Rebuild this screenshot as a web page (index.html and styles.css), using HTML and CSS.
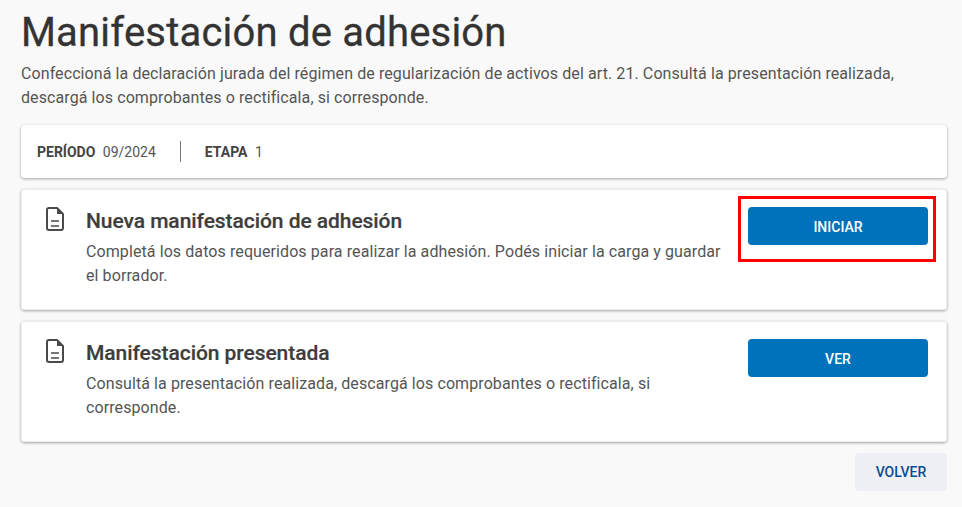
FILE: index.html
```html
<!doctype html>
<html lang="es">
<head>
    <meta charset="utf-8">
    <title>Manifestación de adhesión</title>
    <link rel="stylesheet" href="styles.css">
</head>
<body>
<div class="content">
    <h1>Manifestación de adhesión</h1>
    <p class="intro">Confeccioná la declaración jurada del régimen de regularización de activos del art. 21. Consultá la presentación realizada, descargá los comprobantes o rectificala, si corresponde.</p>

    <div class="card period">
        <span class="period-item"><b>PERÍODO</b> 09/2024</span>
        <span class="period-sep"></span>
        <span class="period-item"><b>ETAPA</b> 1</span>
    </div>

    <div class="card option">
        <svg class="doc-icon" width="18" height="24" viewBox="0 0 18 24"><path d="M11 1H3a2 2 0 0 0-2 2v18a2 2 0 0 0 2 2h12a2 2 0 0 0 2-2V7z" fill="none" stroke="#4a4a4a" stroke-width="2" stroke-linejoin="round"/><path d="M11 1v6h6z" fill="#4a4a4a"/><path d="M5 14h8M5 19h8" stroke="#4a4a4a" stroke-width="1.6"/></svg>
        <div class="option-text">
            <h2>Nueva manifestación de adhesión</h2>
            <p>Completá los datos requeridos para realizar la adhesión. Podés iniciar la carga y guardar el borrador.</p>
        </div>
        <div class="action marked">
            <button class="btn">INICIAR</button>
        </div>
    </div>

    <div class="card option">
        <svg class="doc-icon" width="18" height="24" viewBox="0 0 18 24"><path d="M11 1H3a2 2 0 0 0-2 2v18a2 2 0 0 0 2 2h12a2 2 0 0 0 2-2V7z" fill="none" stroke="#4a4a4a" stroke-width="2" stroke-linejoin="round"/><path d="M11 1v6h6z" fill="#4a4a4a"/><path d="M5 14h8M5 19h8" stroke="#4a4a4a" stroke-width="1.6"/></svg>
        <div class="option-text">
            <h2>Manifestación presentada</h2>
            <p>Consultá la presentación realizada, descargá los comprobantes o rectificala, si corresponde.</p>
        </div>
        <div class="action">
            <button class="btn">VER</button>
        </div>
    </div>

    <div class="footer">
        <button class="btn-back">VOLVER</button>
    </div>
</div>
</body>
</html>
```

FILE: styles.css
```css
html, body {height: 100%;}
body {margin: 0; padding: 0; background: #f9f9f9; color: #333; font-family: Roboto, 'Liberation Sans', sans-serif; overflow: hidden;}
.content {padding: 11px 15px 0 21px; display: flex; flex-direction: column;}
h1 {margin: 0; font-size: 40px; line-height: 44px; font-weight: 400; color: #333; letter-spacing: 0.2px; -webkit-text-stroke: 0.3px #333;}
.intro {margin: 7px 0 0; font-size: 16px; line-height: 24px; color: #555; letter-spacing: 0.09px; width: 920px;}
.card {background: #fff; border-radius: 4px; box-shadow: 0 1px 3px rgba(0, 0, 0, .35);}
.period {margin-top: 15px; height: 53px; display: flex; align-items: center; padding-left: 16px; font-size: 14px; color: #555;}
.period b {color: #444; font-weight: 700; margin-right: 4px;}
.period-sep {width: 1px; height: 21px; background: #777; margin: 0 24px;}
.option {margin-top: 11px; height: 121px; display: flex; box-sizing: border-box; padding: 18px 19px 0 25px; align-items: flex-start; box-shadow: 0 1px 3px rgba(0, 0, 0, .35), inset 0 0 0 1px #ececec;}
.doc-icon {flex: none;}
.option-text {flex: 1; margin-left: 22px; padding-top: 1px;}
h2 {margin: 0; font-size: 21px; line-height: 26px; font-weight: 500; color: #3d3d3d; letter-spacing: -0.06px; -webkit-text-stroke: 0.2px #3d3d3d;}
.option-text p {margin: 6px 0 0; font-size: 16px; line-height: 24px; color: #555; letter-spacing: 0.09px; width: 640px;}
.action {flex: none; width: 180px;}
.btn {width: 180px; height: 38px; border: 0; padding: 1px 0 0; border-radius: 4px; background: #0072bb; color: #fff; font: 500 14px Roboto, sans-serif;}
.marked {position: relative;}
.marked::after {content: ""; position: absolute; top: -11px; left: -10px; right: -8px; bottom: -17px; border: 3px solid #f00; pointer-events: none;}
.footer {display: flex; justify-content: flex-end; margin-top: 11px;}
.btn-back {width: 92px; height: 38px; border: 0; border-radius: 4px; background: #eff0f5; color: #0b4a8f; font: 500 14px Roboto, sans-serif;}
```
